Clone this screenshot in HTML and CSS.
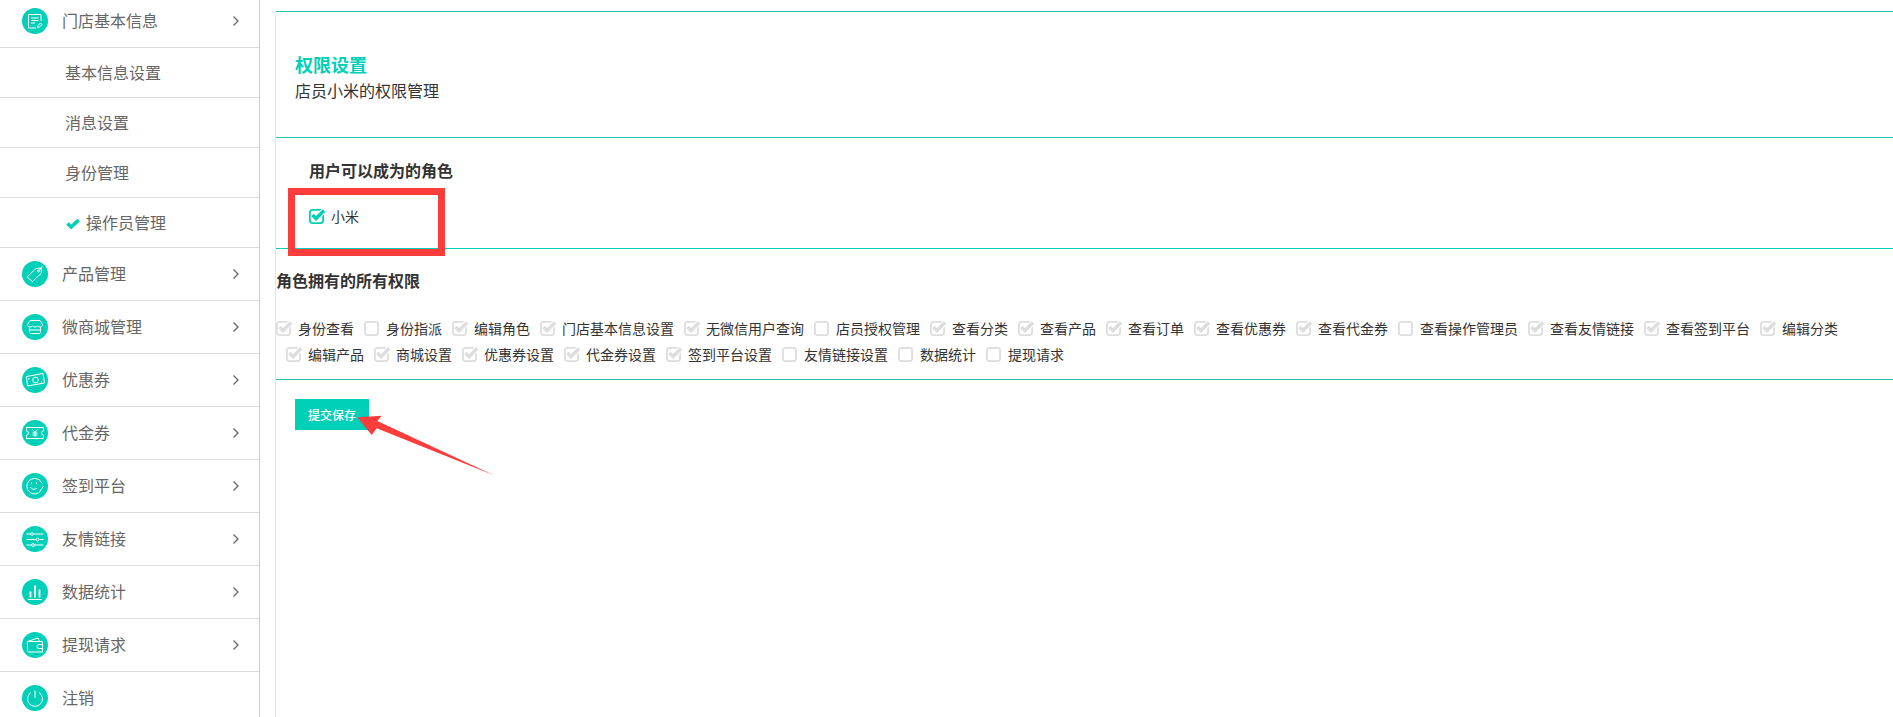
FILE: index.html
```html
<!DOCTYPE html>
<html lang="zh-CN">
<head>
<meta charset="utf-8">
<title>权限设置</title>
<link rel="stylesheet" href="styles.css">
</head>
<body>
<svg class="defs" width="0" height="0" aria-hidden="true">
  <symbol id="chev" viewBox="0 0 8 12"><path d="M1.500 1.500 6 6l-4.500 4.500" fill="none" stroke="currentColor" stroke-width="1.300"/></symbol>
  <symbol id="box-on" viewBox="0 0 16 16"><rect x="0.900" y="1.900" width="13.200" height="13.200" rx="2.500" fill="#fff" stroke="currentColor" stroke-width="1.800"/><path d="M3.500 7 7 10.500 15 2.500" fill="none" stroke="#fff" stroke-width="5.800"/><path d="M3.500 7 7 10.500 15 2.500" fill="none" stroke="currentColor" stroke-width="3.400"/></symbol>
  <symbol id="box-off" viewBox="0 0 16 16"><rect x="0.900" y="1.900" width="13.200" height="13.200" rx="2.500" fill="#fff" stroke="currentColor" stroke-width="1.800"/></symbol>
</svg>
<div class="page">
  <nav class="side">
    <div class="row">
      <svg class="ico" viewBox="0 0 26 26"><circle cx="13" cy="13" r="13" class="disc"/><g class="ln"><path d="M19 13V6.500H6.500V20H14"/><path d="M9 10h7.500M9 12.500h7.500M9 15h4"/><path d="M15.500 19.500l.5-2 2.500-2.500 1.500 1.500-2.500 2.500z"/></g></svg>
      <span class="lbl">门店基本信息</span><svg class="chev"><use href="#chev"/></svg>
    </div>
    <div class="sub">基本信息设置</div>
    <div class="sub">消息设置</div>
    <div class="sub">身份管理</div>
    <div class="sub"><svg class="tick" viewBox="0 0 14 11"><path d="M1.500 5.500 5.200 9 12.700 2" fill="none" stroke="#00d0b8" stroke-width="3.600"/></svg>操作员管理</div>
    <div class="row">
      <svg class="ico" viewBox="0 0 26 26"><circle cx="13" cy="13" r="13" class="disc"/><g class="ln"><path d="M5 16 14 7.500l5-.5.500 5-9 8.500z"/><circle cx="16.500" cy="10" r="1"/><path d="M17 9.500l3.500-4"/></g></svg>
      <span class="lbl">产品管理</span><svg class="chev"><use href="#chev"/></svg>
    </div>
    <div class="row">
      <svg class="ico" viewBox="0 0 26 26"><circle cx="13" cy="13" r="13" class="disc"/><g class="ln"><path d="M8 6.500h10l2.500 4c0 2-1.500 2.500-2.500 2.500-1.500 0-2.500-1-2.500-1s-1 1-2.500 1-2.500-1-2.500-1-1 1-2.500 1c-1 0-2.500-.5-2.500-2.500z"/><path d="M7.500 13v5c0 1 .5 1.500 1.500 1.500h8c1 0 1.500-.5 1.500-1.500v-5"/><path d="M7.500 16h11"/></g></svg>
      <span class="lbl">微商城管理</span><svg class="chev"><use href="#chev"/></svg>
    </div>
    <div class="row">
      <svg class="ico" viewBox="0 0 26 26"><circle cx="13" cy="13" r="13" class="disc"/><g class="ln"><path d="M4.500 9.500 21 6.500l1.500 9.500L5.500 19z"/><circle cx="13.500" cy="13" r="2.800"/><path d="M7 11l-.3 1.500M19.500 14l.3 1.500"/></g></svg>
      <span class="lbl">优惠券</span><svg class="chev"><use href="#chev"/></svg>
    </div>
    <div class="row">
      <svg class="ico" viewBox="0 0 26 26"><circle cx="13" cy="13" r="13" class="disc"/><g class="ln"><path d="M4.500 7.500h17v3.500a2 2 0 0 0 0 4v3.500h-17V15a2 2 0 0 0 0-4z"/><path d="M10.500 9.500 13 12.500l2.500-3M13 12.500v4.500M10.500 13h5M10.500 15h5"/></g></svg>
      <span class="lbl">代金券</span><svg class="chev"><use href="#chev"/></svg>
    </div>
    <div class="row">
      <svg class="ico" viewBox="0 0 26 26"><circle cx="13" cy="13" r="13" class="disc"/><g class="ln"><path d="M20 10.500A7.800 7.800 0 1 0 16.500 20"/><path d="M9.500 9.500v1.500M14.500 9.500v1.500"/><path d="M8.500 14c1 2.500 4.500 3 6.500 1"/><path d="M17 20l4.500-7"/></g></svg>
      <span class="lbl">签到平台</span><svg class="chev"><use href="#chev"/></svg>
    </div>
    <div class="row">
      <svg class="ico" viewBox="0 0 26 26"><circle cx="13" cy="13" r="13" class="disc"/><g class="ln"><path d="M4.500 8h4M11.500 8h10M4.500 13.500h9.500M17 13.500h4.500M4.500 19h5M12.500 19h9"/><circle cx="10" cy="8" r="1.400"/><circle cx="15.500" cy="13.500" r="1.400"/><circle cx="11" cy="19" r="1.400"/></g></svg>
      <span class="lbl">友情链接</span><svg class="chev"><use href="#chev"/></svg>
    </div>
    <div class="row">
      <svg class="ico" viewBox="0 0 26 26"><circle cx="13" cy="13" r="13" class="disc"/><g class="ln wide"><path d="M8.500 12.500v6M13 6.500v12M17.500 10.500v8"/></g><g class="ln"><path d="M6 20.500h14"/></g></svg>
      <span class="lbl">数据统计</span><svg class="chev"><use href="#chev"/></svg>
    </div>
    <div class="row">
      <svg class="ico" viewBox="0 0 26 26"><circle cx="13" cy="13" r="13" class="disc"/><g class="ln"><path d="M5.500 9.500v9c0 1 .5 1.500 1.500 1.500h13.500V9.500z"/><path d="M5.500 9.500 16 6l1.500 3.500"/><path d="M21 12.500h-4a1.500 1.500 0 0 0 0 4h4"/></g></svg>
      <span class="lbl">提现请求</span><svg class="chev"><use href="#chev"/></svg>
    </div>
    <div class="row">
      <svg class="ico" viewBox="0 0 26 26"><circle cx="13" cy="13" r="13" class="disc"/><g class="ln"><path d="M9 7.500a7.500 7.500 0 1 0 8 0"/><path d="M13 5.500v7.500"/></g></svg>
      <span class="lbl">注销</span>
    </div>
  </nav>
  <main class="main">
    <section class="head">
      <h1 class="title">权限设置</h1>
      <p class="subtitle">店员小米的权限管理</p>
    </section>
    <section class="roles">
      <h2 class="roles-title">用户可以成为的角色</h2>
      <div class="role"><svg class="box on"><use href="#box-on"/></svg>小米</div>
    </section>
    <section class="perms">
      <h2 class="perms-title">角色拥有的所有权限</h2>
      <div class="perm-list">
        <span class="perm"><svg class="box"><use href="#box-on"/></svg>身份查看</span>
        <span class="perm"><svg class="box"><use href="#box-off"/></svg>身份指派</span>
        <span class="perm"><svg class="box"><use href="#box-on"/></svg>编辑角色</span>
        <span class="perm"><svg class="box"><use href="#box-on"/></svg>门店基本信息设置</span>
        <span class="perm"><svg class="box"><use href="#box-on"/></svg>无微信用户查询</span>
        <span class="perm"><svg class="box"><use href="#box-off"/></svg>店员授权管理</span>
        <span class="perm"><svg class="box"><use href="#box-on"/></svg>查看分类</span>
        <span class="perm"><svg class="box"><use href="#box-on"/></svg>查看产品</span>
        <span class="perm"><svg class="box"><use href="#box-on"/></svg>查看订单</span>
        <span class="perm"><svg class="box"><use href="#box-on"/></svg>查看优惠券</span>
        <span class="perm"><svg class="box"><use href="#box-on"/></svg>查看代金券</span>
        <span class="perm"><svg class="box"><use href="#box-off"/></svg>查看操作管理员</span>
        <span class="perm"><svg class="box"><use href="#box-on"/></svg>查看友情链接</span>
        <span class="perm"><svg class="box"><use href="#box-on"/></svg>查看签到平台</span>
        <span class="perm"><svg class="box"><use href="#box-on"/></svg>编辑分类</span>
        <span class="perm"><svg class="box"><use href="#box-on"/></svg>编辑产品</span>
        <span class="perm"><svg class="box"><use href="#box-on"/></svg>商城设置</span>
        <span class="perm"><svg class="box"><use href="#box-on"/></svg>优惠券设置</span>
        <span class="perm"><svg class="box"><use href="#box-on"/></svg>代金券设置</span>
        <span class="perm"><svg class="box"><use href="#box-on"/></svg>签到平台设置</span>
        <span class="perm"><svg class="box"><use href="#box-off"/></svg>友情链接设置</span>
        <span class="perm"><svg class="box"><use href="#box-off"/></svg>数据统计</span>
        <span class="perm"><svg class="box"><use href="#box-off"/></svg>提现请求</span>
      </div>
    </section>
    <div class="actions"><button class="save" type="button">提交保存</button></div>
  </main>
</div>
<div class="mark-box"></div>
<svg class="mark-arrow" viewBox="0 0 150 70" width="150" height="70"><path d="M7.300 7.300 31.700 5.700 27.300 11 144.500 65.500 26.700 18.300 21.700 25z" fill="#fd3c3c"/></svg>
</body>
</html>
```
FILE: styles.css
```css
html, body {
  margin: 0;
  padding: 0;
  height: 717px;
  overflow: hidden;
  background: #fff;
}
body {
  position: relative;
  font-family: "Noto Sans CJK SC", "Liberation Sans", sans-serif;
  color: #333;
}
.defs { position: absolute; }
.page { display: flex; align-items: flex-start; }

.side {
  width: 259px;
  flex: none;
  margin-top: -5px;
  border-right: 1px solid #ccc;
  color: #666;
  font-size: 16px;
}
.row {
  display: flex;
  align-items: center;
  height: 52px;
  padding-left: 22px;
  border-bottom: 1px solid #ddd;
}
.row:last-child { height: 60px; align-items: flex-start; padding-top: 13px; box-sizing: border-box; }
.row:last-child .lbl { line-height: 24px; }
.sub {
  display: flex;
  align-items: center;
  height: 47px;
  padding: 0 0 2px 65px;
  border-bottom: 1px solid #ddd;
}
.ico { width: 26px; height: 26px; flex: none; margin-right: 14px; }
.disc { fill: #00d0b8; }
.ln { fill: none; stroke: #fff; stroke-width: 1; }
.wide { stroke-width: 1.800; }
.lbl { flex: 1; line-height: 24px; margin-bottom: 2px; }
.chev { width: 8px; height: 12px; flex: none; margin-right: 19px; color: #666; }
.tick { width: 14px; height: 11px; margin: 3px 6px 0 1px; flex: none; }

.main {
  flex: 1;
  margin: 11px 0 0 15px;
  border-left: 1px solid #e5e5e5;
  min-height: 720px;
}
.head {
  box-sizing: border-box;
  height: 127px;
  padding: 39px 0 0 19px;
  border-top: 1px solid #1fc8b4;
  border-bottom: 1px solid #1fc8b4;
}
.title {
  margin: 0;
  font-size: 18px;
  line-height: 26px;
  font-weight: 700;
  color: #00d0b8;
}
.subtitle { margin: 0; font-size: 16px; line-height: 26px; color: #333; }
.roles {
  box-sizing: border-box;
  height: 111px;
  padding: 20px 0 0 33px;
  border-bottom: 1px solid #00d0b8;
}
.roles-title { margin: 0; font-size: 16px; line-height: 24px; font-weight: 700; color: #333; }
.role {
  display: flex;
  align-items: center;
  margin-top: 24px;
  font-size: 14px;
  line-height: 20px;
}
.box { width: 16px; height: 16px; flex: none; margin-right: 6px; color: #ddd; }
.box.on { color: #00d0b8; }

.perms {
  box-sizing: border-box;
  height: 131px;
  padding-top: 19px;
  border-bottom: 1px solid #1fc0ac;
}
.perms-title { margin: 0; font-size: 16px; line-height: 24px; font-weight: 700; color: #333; }
.perm-list {
  display: flex;
  flex-wrap: wrap;
  margin-top: 23px;
  font-size: 14px;
  line-height: 26px;
}
.perm { display: inline-flex; align-items: center; margin-left: 10px; }
.perm:first-child { margin-left: 0; }

.actions { padding: 19px 0 0 19px; }
.save {
  display: block;
  width: 74px;
  height: 31px;
  padding: 0;
  border: 0;
  background: #00d0b8;
  color: #fff;
  font: 500 12px/31px "Noto Sans CJK SC", "Liberation Sans", sans-serif;
}

.mark-box {
  position: absolute;
  left: 288px;
  top: 188px;
  width: 157px;
  height: 68px;
  box-sizing: border-box;
  border: 7px solid #fd3c3c;
}
.mark-arrow { position: absolute; left: 350px; top: 410px; }
```
